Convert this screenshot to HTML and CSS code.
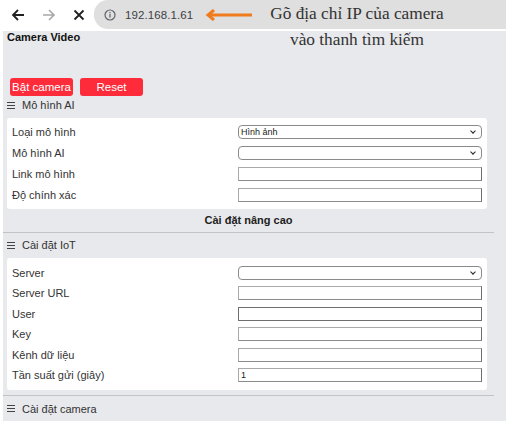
FILE: index.html
```html
<!DOCTYPE html>
<html lang="vi">
<head>
<meta charset="utf-8">
<title>Camera Video</title>
<link rel="stylesheet" href="styles.css">
</head>
<body>
<div class="browser">
  <div class="nav">
    <svg class="nav-icon" width="14" height="14" viewBox="0 0 14 14"><path d="M13 7H2M7 2L2 7l5 5" fill="none" stroke="#202124" stroke-width="1.8"/></svg>
    <svg class="nav-icon" width="14" height="14" viewBox="0 0 14 14"><path d="M1 7h11M7 2l5 5-5 5" fill="none" stroke="#a8a8a8" stroke-width="1.6"/></svg>
    <svg class="nav-icon" width="12" height="12" viewBox="0 0 12 12"><path d="M1.5 1.5l9 9M10.5 1.5l-9 9" fill="none" stroke="#202124" stroke-width="1.8"/></svg>
  </div>
  <div class="omnibox">
    <svg class="info" width="12" height="12" viewBox="0 0 12 12"><circle cx="6" cy="6" r="5" fill="none" stroke="#5f6368" stroke-width="1.2"/><rect x="5.4" y="5" width="1.2" height="3.6" fill="#5f6368"/><rect x="5.4" y="3" width="1.2" height="1.2" fill="#5f6368"/></svg>
    <span class="url">192.168.1.61</span>
    <svg class="arrow" width="48" height="12" viewBox="0 0 48 12"><path d="M47 6H4" stroke="#f07b1c" stroke-width="3"/><path d="M9 1L3 6l6 5" fill="none" stroke="#f07b1c" stroke-width="3"/></svg>
  </div>
  <div class="note">Gõ địa chỉ IP của camera<br>vào thanh tìm kiếm</div>
</div>

<main class="page">
  <h1 class="title">Camera Video</h1>
  <div class="video"></div>
  <div class="buttons">
    <button class="btn">Bật camera</button>
    <button class="btn">Reset</button>
  </div>

  <div class="section-head"><span class="ham"></span>Mô hình AI</div>
  <div class="card">
    <div class="row"><span class="label">Loại mô hình</span><span class="select">Hình ảnh</span></div>
    <div class="row"><span class="label">Mô hình AI</span><span class="select"></span></div>
    <div class="row"><span class="label">Link mô hình</span><span class="input"></span></div>
    <div class="row"><span class="label">Độ chính xác</span><span class="input"></span></div>
  </div>

  <div class="divider">Cài đặt nâng cao</div>

  <div class="section-head iot"><span class="ham"></span>Cài đặt IoT</div>
  <div class="card card-tight">
    <div class="row"><span class="label">Server</span><span class="select"></span></div>
    <div class="row"><span class="label">Server URL</span><span class="input"></span></div>
    <div class="row"><span class="label">User</span><span class="input dark"></span></div>
    <div class="row"><span class="label">Key</span><span class="input"></span></div>
    <div class="row"><span class="label">Kênh dữ liệu</span><span class="input"></span></div>
    <div class="row"><span class="label">Tần suất gửi (giây)</span><span class="input">1</span></div>
  </div>

  <div class="rule"></div>
  <div class="section-head cam"><span class="ham"></span>Cài đặt camera</div>
</main>
</body>
</html>
```
FILE: styles.css
```css
* { box-sizing: border-box; }
body {
  margin: 0;
  background: #ffffff;
  font-family: "Liberation Sans", Arial, sans-serif;
  color: #333;
}
.browser {
  position: relative;
  display: flex;
  height: 29px;
  align-items: stretch;
}
.nav {
  display: flex;
  align-items: center;
  gap: 17px;
  width: 94px;
  padding-left: 11px;
}
.nav-icon { display: block; }
.omnibox {
  flex: 0 0 412px;
  display: flex;
  align-items: center;
  background: #dfdfe0;
  border-radius: 14px 0 0 14px;
  padding-left: 10px;
}
.info { display: block; }
.url {
  margin-left: 9px;
  font-size: 11.5px;
  color: #3c4043;
  letter-spacing: 0.1px;
}
.arrow { margin-left: 12px; display: block; }
.note {
  position: absolute;
  left: 257px;
  top: 1px;
  width: 200px;
  text-align: center;
  font-family: "Liberation Serif", "Times New Roman", serif;
  font-size: 17.3px;
  line-height: 26px;
  color: #333;
}
.page {
  margin: 2px 6px 0 3px;
  background: #e8e9ec;
  padding: 0 4px 6px 4px;
  width: 503px;
}
.title {
  margin: 0;
  font-size: 11px;
  font-weight: bold;
  line-height: 12px;
  color: #111;
}
.video { height: 35px; }
.buttons {
  display: flex;
  gap: 7px;
  padding-left: 3px;
}
.btn {
  width: 63px;
  height: 18px;
  border: 0;
  border-radius: 3px;
  background: #fe2c3b;
  color: #fff;
  font-family: "Liberation Sans", Arial, sans-serif;
  font-size: 11.5px;
  padding: 0;
}
.section-head {
  display: flex;
  align-items: center;
  margin-top: 3px;
  height: 12px;
  font-size: 11px;
  color: #333;
}
.section-head.iot { margin-top: 6px; }
.section-head.cam { margin-top: 7px; }
.ham {
  width: 8px;
  height: 7px;
  margin: 0 7px 0 0;
  border-top: 1px solid #444;
  border-bottom: 1px solid #444;
  position: relative;
}
.ham::after {
  content: "";
  position: absolute;
  left: 0;
  right: 0;
  top: 2px;
  border-top: 1px solid #444;
}
.card {
  margin-top: 7px;
  width: 480px;
  background: #fff;
  border-radius: 3px;
  padding: 7px 5px;
  display: flex;
  flex-direction: column;
  gap: 7px;
}
.card-tight {
  padding: 8px 5px;
  gap: 6.4px;
}
.row {
  display: flex;
  align-items: center;
  height: 14px;
}
.label {
  width: 226px;
  font-size: 11px;
  color: #333;
}
.select, .input {
  width: 244px;
  height: 14px;
  background: #fff;
  font-size: 9px;
  line-height: 12px;
  padding-left: 2px;
  color: #222;
  position: relative;
}
.select {
  border: 1px solid #8a8a8a;
  border-radius: 4px;
}
.select::after {
  content: "";
  position: absolute;
  right: 6px;
  top: 3px;
  width: 3px;
  height: 3px;
  border-right: 1.5px solid #222;
  border-bottom: 1.5px solid #222;
  transform: rotate(45deg);
}
.input {
  border: 1px solid #a9a9a9;
  border-right-color: #6e6e6e;
  border-bottom-color: #8a8a8a;
}
.input.dark { border-color: #6e6e6e; }
.divider {
  margin: 0 8px 0 -4px;
  padding: 5px 0 5px;
  border-bottom: 1px solid #c3c3c5;
  text-align: center;
  font-size: 11px;
  line-height: 13px;
  font-weight: bold;
  color: #222;
}
.rule {
  margin: 5px 8px 0 -4px;
  border-top: 1px solid #c3c3c5;
}
```
